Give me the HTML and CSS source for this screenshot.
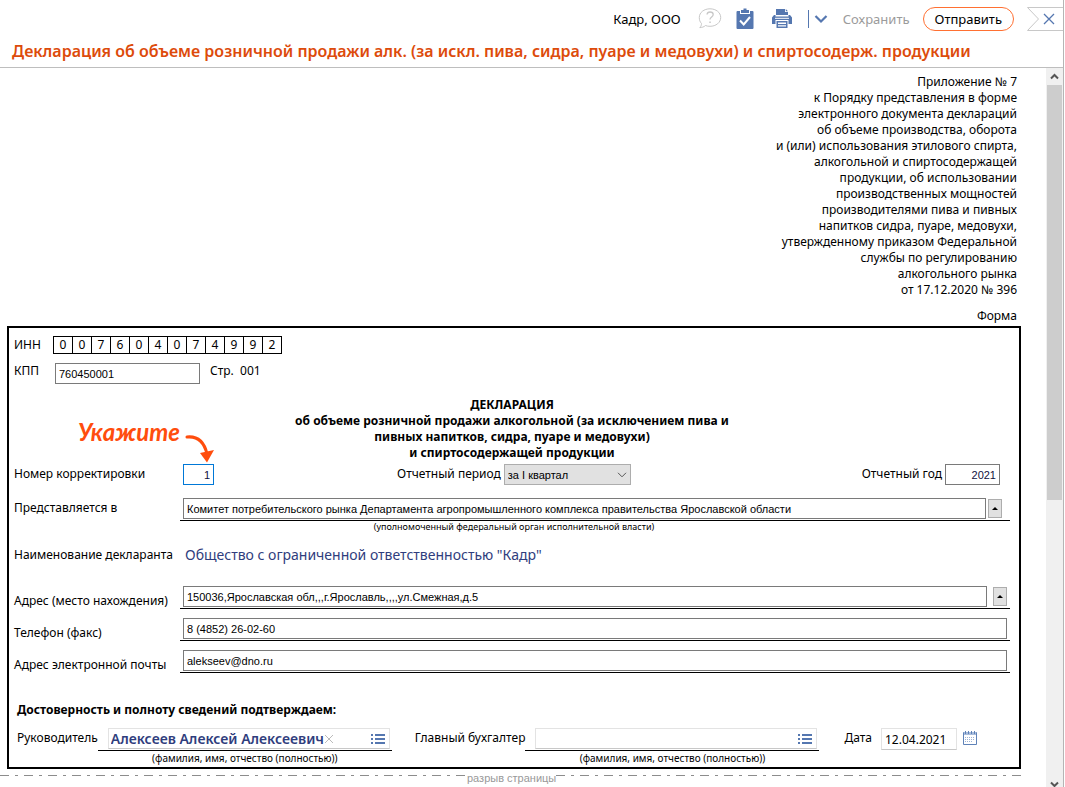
FILE: index.html
```html
<!DOCTYPE html>
<html lang="ru">
<head>
<meta charset="utf-8">
<title>Декларация</title>
<link rel="stylesheet" href="styles.css">
</head>
<body>
<div class="window">
  <header class="header">
    <div class="toolbar">
      <span class="company">Кадр, ООО</span>
      <button class="icon-button help" aria-label="Справка">
        <svg width="24" height="22" viewBox="0 0 24 22" fill="none" stroke="#c8c8c8"><path d="M12 .8C18 .8 22.700 4.500 22.700 9.500S18 18.300 12 18.300c-1.700 0-3.200-.2-4.500-.8C6 19 4 19.500 1.800 19.600c1.200-1 1.700-2.600 1.700-4.100C2 14 1.300 12 1.300 9.500 1.300 4.500 6 .8 12 .8z"/><path d="M9 6.500C9.300 4.600 10.500 4 12 4c2 0 3.200 1 3.200 2.600 0 2.400-3.200 2.400-3.200 5" stroke-width="1.300"/><path d="M11.300 13.500h1.500v1.500h-1.500z" fill="#c8c8c8" stroke="none"/></svg>
      </button>
      <button class="icon-button check" aria-label="Проверить">
        <svg width="18" height="22" viewBox="0 0 18 22"><path d="M1.500 3H4v3h10V3h2.500q1 0 1 1v16q0 1-1 1h-15q-1 0-1-1V4q0-1 1-1z" fill="#5577b0"/><path d="M5 5V2h2.500V.5h3V2H13v3z" fill="#5577b0"/><path d="M4 12.500l3.700 4L14 9" fill="none" stroke="#fff" stroke-width="2"/></svg>
      </button>
      <button class="icon-button print" aria-label="Печать">
        <svg width="20" height="20" viewBox="0 0 20 20" fill="#5577b0"><path d="M4 0h9v3h3v3H4zM13.800 0L16 2.300h-2.200z"/><path d="M2 6h1.500v1.500h13V6H18l2 2.500V15h-3.500v-4h-13v4H0V8.500z"/><path d="M4.500 12h11v7h-11zM6 13.500V15h8v-1.500zm0 2.700v1.300h8v-1.300z" fill-rule="evenodd"/><path d="M3 8.800h14v1H3z" fill="#fff"/></svg>
      </button>
      <button class="icon-button more" aria-label="Ещё">
        <svg width="20" height="20" viewBox="0 0 20 20" fill="none" stroke="#5577b0"><path d="M.5 1v18"/><path d="M7.500 7l5.500 5.500L18.500 7" stroke-width="2.200"/></svg>
      </button>
      <button class="save">Сохранить</button>
      <button class="send">Отправить</button>
      <button class="icon-button close" aria-label="Закрыть">
        <svg width="37" height="24" viewBox="0 0 37 24" fill="none"><path d="M37 .5H1.500l11 11.500L1.500 23.500H37" stroke="#c8c8c8"/><path d="M18 7l10 10M28 7L18 17" stroke="#5577b0" stroke-width="1.300"/></svg>
      </button>
    </div>
    <h1 class="title">Декларация об объеме розничной продажи алк. (за искл. пива, сидра, пуаре и медовухи) и спиртосодерж. продукции</h1>
  </header>
  <div class="pane">
    <main class="document">
      <p class="annex">Приложение № 7<br>к Порядку представления в форме<br>электронного документа деклараций<br>об объеме производства, оборота<br>и (или) использования этилового спирта,<br>алкогольной и спиртосодержащей<br>продукции, об использовании<br>производственных мощностей<br>производителями пива и пивных<br>напитков сидра, пуаре, медовухи,<br>утвержденному приказом Федеральной<br>службы по регулированию<br>алкогольного рынка<br>от 17.12.2020 № 396</p>
      <p class="annex form-word">Форма</p>
      <form class="form">
        <div class="inn-row">
          <span class="short-label">ИНН</span>
          <table class="inn"><tr><td>0</td><td>0</td><td>7</td><td>6</td><td>0</td><td>4</td><td>0</td><td>7</td><td>4</td><td>9</td><td>9</td><td>2</td></tr></table>
        </div>
        <div class="kpp-row">
          <label class="short-label" for="kpp">КПП</label>
          <input class="box kpp" id="kpp" value="760450001">
          <span>Стр.&nbsp; 001</span>
        </div>
        <h2 class="form-title">ДЕКЛАРАЦИЯ<br>об объеме розничной продажи алкогольной (за исключением пива и<br>пивных напитков, сидра, пуаре и медовухи)<br>и спиртосодержащей продукции</h2>
        <div class="period-row">
          <label for="correction">Номер корректировки</label>
          <div class="correction-cell">
            <input class="box number active" id="correction" value="1">
            <div class="hint"><span>Укажите</span>
              <svg width="32" height="32" viewBox="0 0 32 32"><path d="M3 4c10-1 17 4 20 17" fill="none" stroke="#ff4d0d" stroke-width="3" stroke-linecap="round"/><path d="M16 20l14-3-7 12.500z" fill="#ff4d0d"/></svg>
            </div>
          </div>
          <div class="pair">
            <label for="period">Отчетный период</label>
            <span class="select-wrap"><select id="period"><option>за I квартал</option></select><svg width="10" height="6" viewBox="0 0 10 6"><path d="M1 .8l4 4 4-4" fill="none" stroke="#555"/></svg></span>
          </div>
          <div class="pair year">
            <label for="year">Отчетный год</label>
            <input class="box number" id="year" value="2021">
          </div>
        </div>
        <div class="row authority">
          <label for="authority">Представляется в</label>
          <div>
            <div class="field"><input class="box" id="authority" value="Комитет потребительского рынка Департамента агропромышленного комплекса правительства Ярославской области"><button class="expand" type="button" aria-label="Развернуть"><i></i></button></div>
            <p class="caption">(уполномоченный федеральный орган исполнительной власти)</p>
          </div>
        </div>
        <div class="row declarant">
          <span>Наименование декларанта</span>
          <span class="declarant-name">Общество с ограниченной ответственностью "Кадр"</span>
        </div>
        <div class="row contact">
          <label for="address">Адрес (место нахождения)</label>
          <div class="field spaced"><input class="box" id="address" value="150036,Ярославская обл,,,г.Ярославль,,,,ул.Смежная,д.5"><button class="expand" type="button" aria-label="Развернуть"><i></i></button></div>
        </div>
        <div class="row contact">
          <label for="phone">Телефон (факс)</label>
          <div class="field"><input class="box" id="phone" value="8 (4852) 26-02-60"></div>
        </div>
        <div class="row contact">
          <label for="email">Адрес электронной почты</label>
          <div class="field"><input class="box" id="email" value="alekseev@dno.ru"></div>
        </div>
        <h3 class="confirm">Достоверность и полноту сведений подтверждаем:</h3>
        <div class="sign-row">
          <label for="head">Руководитель</label>
          <div class="signer">
            <div class="signer-line"><div class="person"><input id="head" class="head" value="Алексеев Алексей Алексеевич"><button type="button" class="icon-button clear" aria-label="Очистить"><svg width="10" height="10" viewBox="0 0 10 10"><path d="M1 1l8 8M9 1L1 9" stroke="#bbb"/></svg></button><button type="button" class="icon-button list" aria-label="Выбрать"><svg width="14" height="10" viewBox="0 0 14 10" fill="#5577b0"><path d="M0 0h2v2H0zM4 0h10v2H4zM0 4h2v2H0zM4 4h10v2H4zM0 8h2v2H0zM4 8h10v2H4z"/></svg></button></div></div>
            <p class="caption">(фамилия, имя, отчество (полностью))</p>
          </div>
          <label class="accountant-label" for="accountant">Главный бухгалтер</label>
          <div class="signer">
            <div class="signer-line"><div class="person"><input id="accountant"><button type="button" class="icon-button list" aria-label="Выбрать"><svg width="14" height="10" viewBox="0 0 14 10" fill="#5577b0"><path d="M0 0h2v2H0zM4 0h10v2H4zM0 4h2v2H0zM4 4h10v2H4zM0 8h2v2H0zM4 8h10v2H4z"/></svg></button></div></div>
            <p class="caption">(фамилия, имя, отчество (полностью))</p>
          </div>
          <label class="date-label" for="date">Дата</label>
          <input class="date" id="date" value="12.04.2021">
          <button type="button" class="icon-button calendar" aria-label="Календарь"><svg width="14" height="14" viewBox="0 0 14 14"><path d="M.5 1.500h13v12H.5z" fill="#fff" stroke="#5f82b8"/><path d="M1 1h12v3H1z" fill="#a9bddc"/><path d="M2.500 0v3M5.500 0v3M8.500 0v3M11.500 0v3" stroke="#5f82b8"/><path d="M2 6.500h10M2 8.500h10M2 10.500h7" stroke="#9db3d6" stroke-dasharray="1 1"/></svg></button>
        </div>
      </form>
      <div class="break">
        <svg class="dash" height="1"><path d="M0 .5h4000" stroke="#8c8c8c" stroke-dasharray="9 6 3 6"/></svg>
        <span>разрыв страницы</span>
        <svg class="dash" height="1"><path d="M0 .5h4000" stroke="#8c8c8c" stroke-dasharray="9 6 3 6"/></svg>
      </div>
    </main>
    <div class="scrollbar">
      <svg class="arrow" width="17" height="17" viewBox="0 0 17 17"><path d="M5 10.500L8.500 7l3.500 3.500" fill="none" stroke="#555" stroke-width="2"/></svg>
      <div class="thumb"></div>
      <svg class="arrow" width="17" height="8" viewBox="0 0 17 8"><path d="M5 3.500L8.500 7 12 3.500" fill="none" stroke="#555" stroke-width="2"/></svg>
    </div>
  </div>
</div>
</body>
</html>
```
FILE: styles.css
```css
* { box-sizing: border-box; }
body { margin: 0; background: #fff; color: #000; font: 12px/16px "Noto Sans", sans-serif; }
h1, h2, h3, p { margin: 0; }
input, button, select { font: inherit; color: inherit; margin: 0; border-radius: 0; }
button { padding: 0; border: 0; background: none; white-space: nowrap; }
svg { display: block; flex: none; }

.window { display: flex; flex-direction: column; height: 100vh; overflow: hidden; margin-right: 1px; border-right: 1px solid #b5b5b5; }
.header { flex: none; border-bottom: 1px solid #bebebe; height: 68px; padding-top: 7px; }
.toolbar { display: flex; align-items: center; justify-content: flex-end; height: 24px; font-size: 13px; }
.company { margin-right: 17px; }
.help { margin-right: 14px; }
.check { margin-right: 18px; }
.print { margin-right: 16px; }
.more { margin-right: 15px; }
.save { color: #9b9b9b; margin-right: 13px; }
.send { height: 24px; padding: 0 11px; border: 1px solid #ff7032; border-radius: 12px; margin-right: 12px; }
.title { padding: 8px 12px; color: #dd4b0b; font-size: 16px; font-weight: 600; line-height: 24px; white-space: nowrap; }

.pane { display: flex; flex: 1; min-height: 0; }
.document { flex: 1; min-width: 0; overflow: hidden; padding: 6px 25px 0 7px; }
.annex { text-align: right; padding-right: 4px; }
.form-word { padding-top: 10px; }
.form { margin-top: 2px; border: 2px solid #000; padding: 8px 9px 2px 5px; }

.short-label { width: 39px; }
.inn-row { display: flex; height: 18px; align-items: center; }
.inn { border-collapse: collapse; }
.inn td { width: 19px; height: 17px; padding: 0; border: 1px solid #000; text-align: center; line-height: 16px; }
.kpp-row { display: flex; height: 21px; margin-top: 9px; gap: 2px; }
.kpp-row > span { margin-left: 8px; }
.box { height: 21px; min-width: 0; padding: 0 3px; border: 1px solid #7a7a7a; background: #fff; font-family: "Liberation Sans", Arial, sans-serif; font-size: 11px; outline: 0; }
.kpp { width: 145px; }
.form-title { padding: 13px 0 3px; font-size: 12px; line-height: 16px; text-align: center; }

.period-row { display: grid; grid-template-columns: 169px 214px 1fr auto; height: 21px; line-height: 20px; }
.pair { display: flex; gap: 3px; white-space: nowrap; }
.year { padding-right: 10px; }
.number { text-align: right; color: #101040; }
.active { width: 31px; border-color: #0078d7; }
.year .number { width: 55px; }
.correction-cell { position: relative; display: flex; }
.hint { position: absolute; right: 181px; bottom: 20px; display: flex; align-items: flex-start; gap: 4px; color: #ff4d0d; font: italic bold 24px/40px Lato, sans-serif; }
.hint svg { margin-top: 21px; }
.select-wrap { position: relative; width: 127px; }
.select-wrap select { appearance: none; width: 100%; height: 21px; padding: 0 3px; border: 1px solid #adadad; background: #e1e1e1; font-family: "Liberation Sans", Arial, sans-serif; font-size: 11px; }
.select-wrap svg { position: absolute; right: 4px; top: 8px; }

.row { display: grid; grid-template-columns: 166px 1fr; }
.field { display: flex; height: 23px; gap: 2px; padding: 0 3px; border-bottom: 1px solid #000; }
.field .box { flex: 1; }
.spaced { gap: 6px; }
.expand { width: 14px; height: 19px; margin-top: 1px; border: 1px solid #adadad; background: #e1e1e1; display: grid; place-items: center; }
.expand i { border: 3px solid transparent; border-top: 0; border-bottom-color: #000; }
.authority { margin-top: 13px; line-height: 20px; }
.authority .field { padding-right: 8px; }
.caption { font-size: 9px; line-height: 12px; text-align: center; }
.authority .caption { padding-right: 162px; }
.declarant { margin-top: 12px; line-height: 20px; }
.declarant-name { padding-left: 5px; color: #2f3d7d; font-size: 14px; }
.contact { margin-top: 9px; align-items: end; }
.declarant + .contact { margin-top: 21px; }
.confirm { padding: 29px 0 10px 3px; font-size: 12px; line-height: 16px; }

.sign-row { display: flex; padding: 0 33px 0 3px; line-height: 20px; }
.signer { flex: 1; }
.signer .caption { font-size: 10px; line-height: 14px; }
.signer-line { border-bottom: 1px solid #000; padding: 0 2px 1px 10px; }
.person { display: flex; align-items: center; height: 21px; padding: 0 4px 0 2px; border: 1px solid #e3e3e3; border-bottom-color: #c8c8c8; }
.person input { flex: 1; min-width: 0; height: 18px; padding: 0; border: 0; background: none; outline: 0; }
.person .head { flex: none; width: 213px; color: #2f3d7d; font-size: 14px; font-weight: 600; }
.person .list { margin-left: auto; }
.accountant-label { margin-left: 23px; }
.date-label { margin-left: 25px; }
.date { width: 76px; height: 22px; margin-left: 9px; padding: 0 3px; border: 1px solid #e3e3e3; border-bottom-color: #c8c8c8; }
.calendar { height: 20px; margin-left: 6px; }

.break { display: flex; margin: 0 -4px 0 -7px; color: #999; font: 11px/14px "Liberation Sans", Arial, sans-serif; padding-top: 2px; }
.dash { flex: 1; min-width: 0; margin-top: 4px; }
.dash:first-child { flex: 0 1 467px; }

.scrollbar { display: flex; flex-direction: column; width: 17px; background: #f0f0f0; }
.thumb { height: 415px; background: #cdcdcd; margin: 0 1px; }
.arrow:last-child { margin-top: auto; }
```
